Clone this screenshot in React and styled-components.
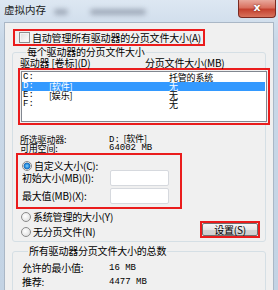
import styled, { createGlobalStyle } from 'styled-components';

const Global = createGlobalStyle`
  body {
    margin: 0;
    background: #c8d6e5;
    font-family: "Noto Sans CJK SC", "DejaVu Sans", sans-serif;
  }
`;

const Window = styled.div`
  width: 278px;
  height: 290px;
  overflow: hidden;
  background: linear-gradient(#dde7f2, #c9d8e8 40px, #c3d3e4);
  display: flex;
  flex-direction: column;
`;

const TitleBar = styled.div`
  height: 22px;
  display: flex;
  align-items: flex-start;
  flex-shrink: 0;
`;

const Title = styled.div`
  margin: 3px 0 0 4px;
  font-size: 10.5px;
  line-height: 13px;
  color: #1a1a1a;
`;

const Smudge = styled.div`
  margin: 9px 0 0 ${(p) => p.gap}px;
  width: ${(p) => p.w}px;
  height: 6px;
  border-radius: 3px;
  background: rgba(60, 70, 90, 0.35);
  filter: blur(2.5px);
`;

const CloseButton = styled.div`
  margin-left: auto;
  margin-right: 2px;
  width: 38px;
  height: 18px;
  box-sizing: border-box;
  border: 1px solid #7a2b22;
  border-top: none;
  border-radius: 0 0 4px 4px;
  background: linear-gradient(#e8a89c, #d9705f 45%, #c4412f 55%, #d8735c);
  color: #fff;
  font-family: "DejaVu Sans", sans-serif;
  font-weight: bold;
  font-size: 11px;
  line-height: 16px;
  text-align: center;
  text-shadow: 0 0 2px #5a1a12;
`;

const Client = styled.div`
  margin: 0 4px 0 4px;
  flex: 1;
  background: #f0f0f0;
  border-top: 1px solid #aab7c6;
  border-left: 1px solid #aab7c6;
  border-right: 1px solid #aab7c6;
  font-size: 10px;
  letter-spacing: -0.2px;
  line-height: 10px;
  color: #000;
`;

const RedBox = styled.div`
  box-sizing: border-box;
  border: 2px solid #ea1c1c;
  width: ${(p) => p.w}px;
  height: ${(p) => p.h}px;
  margin: ${(p) => p.m || 0};
`;

const AutoBox = styled(RedBox)`
  display: flex;
  align-items: center;
  padding-left: 4px;
  gap: 2px;
  white-space: nowrap;
`;

const Checkbox = styled.span`
  flex-shrink: 0;
  width: 11px;
  height: 11px;
  box-sizing: border-box;
  border: 1px solid #8e8f8f;
  background: linear-gradient(135deg, #dcdcdc, #ffffff);
  box-shadow: inset 0 0 0 1px #f4f4f4;
`;

const Group = styled.fieldset`
  margin: ${(p) => p.mt}px 0 0 7px;
  width: 254px;
  box-sizing: border-box;
  border: 1px solid #d5dfe5;
  border-radius: 3px;
  padding: ${(p) => p.pad};
  min-width: 0;
`;

const Legend = styled.legend`
  padding: 0 1px;
  margin-left: 6px;
  line-height: 10px;
`;

const HeaderRow = styled.div`
  display: grid;
  grid-template-columns: 125px 1fr;
  height: 10px;
  white-space: nowrap;
`;

const ListFrame = styled(RedBox)`
  padding: 1px;
`;

const List = styled.div`
  height: 51px;
  box-sizing: border-box;
  border: 1px solid #828790;
  background: #fff;
  padding: 1px 1px 0 0;
`;

const DriveRow = styled.div`
  display: grid;
  grid-template-columns: 26px 120px 1fr;
  height: 9px;
  line-height: 9px;
  font-size: 9px;
  padding-left: 1px;
  white-space: nowrap;
  background: ${(p) => (p.selected ? '#3399ff' : 'transparent')};
  color: ${(p) => (p.selected ? '#fff' : '#000')};
`;

const Mono = styled.span`
  font-family: "Liberation Mono", "Noto Sans CJK SC", monospace;
  font-size: ${(p) => p.size || 9}px;
  letter-spacing: 0;
`;

const InfoGrid = styled.div`
  display: grid;
  grid-template-columns: ${(p) => p.col}px 1fr;
  grid-auto-rows: ${(p) => p.row}px;
  line-height: ${(p) => p.row}px;
  margin: ${(p) => p.m};
  align-items: center;
  white-space: nowrap;
  font-size: ${(p) => p.fs || 10}px;
`;

const CustomBox = styled(RedBox)`
  padding: 6px 0 0 4px;
`;

const RadioRow = styled.div`
  display: flex;
  align-items: center;
  gap: 2px;
  height: ${(p) => p.h}px;
  white-space: nowrap;
`;

const Radio = styled.span`
  flex-shrink: 0;
  width: 10px;
  height: 10px;
  box-sizing: border-box;
  border-radius: 50%;
  border: 1px solid #8b8b8b;
  background: ${(p) =>
    p.checked
      ? 'radial-gradient(circle, #7fd0ff 0, #1a7fd4 2.5px, #2e5f9a 3.4px, #e9e9e9 3.6px, #ffffff 5px)'
      : 'radial-gradient(circle at 40% 40%, #ffffff, #d8d8d8)'};
`;

const FieldGrid = styled.div`
  display: grid;
  grid-template-columns: 88px 59px;
  grid-auto-rows: 16px;
  row-gap: 2px;
  align-items: center;
  white-space: nowrap;
`;

const Input = styled.div`
  height: 16px;
  box-sizing: border-box;
  border: 1px solid #d6d9de;
  border-radius: 2px;
  background: #fff;
`;

const BottomRow = styled.div`
  display: grid;
  grid-template-columns: 180px 60px;
  align-items: end;
  margin-top: 2px;
`;

const RadioStack = styled.div`
  display: flex;
  flex-direction: column;
  gap: 4px;
  padding-left: 1px;
`;

const ButtonBox = styled(RedBox)`
  margin-bottom: -1px;
`;

const Button = styled.div`
  height: 13px;
  box-sizing: border-box;
  border: 1px solid #707070;
  border-radius: 2px;
  background: linear-gradient(#f6f6f6, #e6e6e6 50%, #d4d4d4 51%, #cfcfcf);
  text-align: center;
  line-height: 11px;
`;

const drives = [
  { d: 'C:', label: '', size: '托管的系统' },
  { d: 'D:', label: '[软件]', size: '无', selected: true },
  { d: 'E:', label: '[娱乐]', size: '无' },
  { d: 'F:', label: '', size: '无' },
];

const App = () => {
  return (
    <Window>
      <Global />
      <TitleBar>
        <Title>虚拟内存</Title>
        <Smudge gap={8} w={14} />
        <Smudge gap={22} w={56} />
        <CloseButton>x</CloseButton>
      </TitleBar>
      <Client>
        <AutoBox w={192} h={17} m="6px 0 0 8px">
          <Checkbox />
          <span>自动管理所有驱动器的分页文件大小(A)</span>
        </AutoBox>

        <Group mt={1} pad="1px 0 4px 7px">
          <Legend>每个驱动器的分页文件大小</Legend>
          <HeaderRow>
            <span>驱动器 [卷标](D)</span>
            <span>分页文件大小(MB)</span>
          </HeaderRow>
          <ListFrame w={252} h={57} m="0 0 0 -2px">
            <List>
              {drives.map((r) => (
                <DriveRow key={r.d} selected={r.selected}>
                  <Mono>{r.d}</Mono>
                  <span>{r.label}</span>
                  <span>{r.size}</span>
                </DriveRow>
              ))}
            </List>
          </ListFrame>

          <InfoGrid col={89} row={9} fs={9} m="10px 0 0 0">
            <span>所选驱动器:</span>
            <span><Mono>D:</Mono>&nbsp;&nbsp;[软件]</span>
            <span>可用空间:</span>
            <Mono>64002 MB</Mono>
          </InfoGrid>

          <CustomBox w={166} h={56} m="0 0 0 -4px">
            <RadioRow h={9}>
              <Radio checked />
              <span>自定义大小(C):</span>
            </RadioRow>
            <FieldGrid>
              <span>初始大小(MB)(I):</span>
              <Input />
              <span>最大值(MB)(X):</span>
              <Input />
            </FieldGrid>
          </CustomBox>

          <BottomRow>
            <RadioStack>
              <RadioRow h={11}>
                <Radio />
                <span>系统管理的大小(Y)</span>
              </RadioRow>
              <RadioRow h={11}>
                <Radio />
                <span>无分页文件(N)</span>
              </RadioRow>
            </RadioStack>
            <ButtonBox w={60} h={17}>
              <Button>设置(S)</Button>
            </ButtonBox>
          </BottomRow>
        </Group>

        <Group mt={4} pad="5px 0 4px 9px">
          <Legend>所有驱动器分页文件大小的总数</Legend>
          <InfoGrid col={87} row={14} m="0">
            <span>允许的最小值:</span>
            <Mono>16 MB</Mono>
            <span>推荐:</span>
            <Mono>4477 MB</Mono>
            <span>当前已分配:</span>
            <Mono>4096 MB</Mono>
          </InfoGrid>
        </Group>
      </Client>
    </Window>
  );
};

export default App;
